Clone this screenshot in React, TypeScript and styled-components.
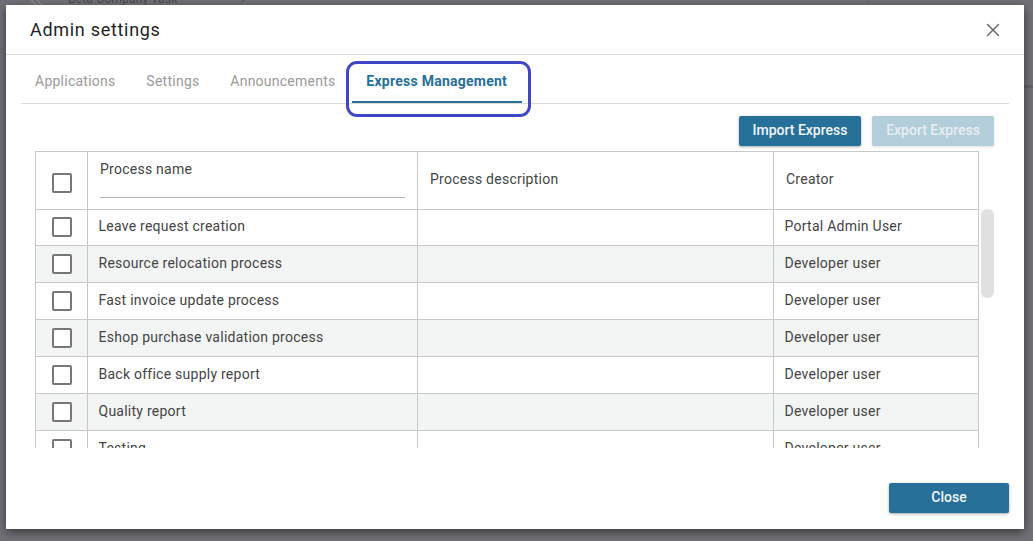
import styled, { createGlobalStyle } from "styled-components";
import { ChevronRight, X } from "lucide-react";

const GlobalStyle = createGlobalStyle`
  html, body {
    margin: 0;
    padding: 0;
    height: 100%;
    overflow: hidden;
    background: #707076;
    font-family: Roboto, "Liberation Sans", sans-serif;
  }
`;

const Page = styled.div`
  position: relative;
  width: 1033px;
  height: 541px;
  overflow: hidden;
  background: #707076;
`;

const BehindRow = styled.div`
  width: 868px;
  height: 6px;
  box-sizing: border-box;
  display: flex;
  align-items: flex-end;
  padding-left: 28px;
  border-right: 1px solid #66666b;
  color: #4a4a4e;
  font-size: 12px;
  letter-spacing: 0.2px;
  line-height: 14px;
`;

const BehindText = styled.span`
  width: 168px;
  margin-left: 23px;
  white-space: nowrap;
`;

const BehindRule = styled.div`
  height: 3px;
  margin: 79px 0 0 1000px;
  background: #636368;
`;

const Dialog = styled.div`
  position: absolute;
  left: 6px;
  top: 5px;
  width: 1018px;
  height: 524px;
  display: flex;
  flex-direction: column;
  background: #fff;
  box-shadow: 0 3px 9px rgba(0, 0, 0, 0.5);
`;

const Header = styled.div`
  height: 50px;
  box-sizing: border-box;
  display: flex;
  align-items: center;
  justify-content: space-between;
  padding: 0 20px 0 24px;
  border-bottom: 1px solid #dcdcdc;
  flex-shrink: 0;
`;

const Title = styled.h1`
  margin: 0;
  font-size: 18px;
  font-weight: 400;
  letter-spacing: 0.7px;
  color: #1f1f1f;
`;

const CloseIcon = styled.button`
  display: flex;
  padding: 0;
  border: 0;
  background: none;
  color: #6b6b6b;
`;

const Body = styled.div`
  flex: 1;
  min-height: 0;
  display: flex;
  flex-direction: column;
  padding: 0 15px;
`;

const TabBar = styled.div`
  height: 49px;
  box-sizing: border-box;
  display: flex;
  gap: 1px;
  border-bottom: 1px solid #dcdcdc;
  flex-shrink: 0;
`;

const Tab = styled.div<{ $active?: boolean }>`
  position: relative;
  height: 48px;
  box-sizing: border-box;
  padding: 5px ${(p) => (p.$active ? 14.5 : 15.8)}px 0 14px;
  display: flex;
  align-items: center;
  font-size: 14px;
  letter-spacing: 0.25px;
  font-weight: ${(p) => (p.$active ? 700 : 400)};
  color: ${(p) => (p.$active ? "#26709a" : "#9a9a9a")};
  border-bottom: 2px solid ${(p) => (p.$active ? "#26709a" : "transparent")};
`;

const Highlight = styled.span`
  position: absolute;
  left: -6px;
  top: 6px;
  right: -9.5px;
  bottom: -16px;
  border: 3px solid #4146c6;
  border-radius: 11px;
  pointer-events: none;
`;

const Toolbar = styled.div`
  height: 47px;
  display: flex;
  align-items: flex-start;
  justify-content: flex-end;
  gap: 11px;
  padding: 12px 15px 0 0;
  box-sizing: border-box;
  flex-shrink: 0;
`;

const Button = styled.button<{ $disabled?: boolean; $width?: number }>`
  height: 30px;
  width: ${(p) => p.$width ?? 122}px;
  padding: 0 0 2px;
  border: 0;
  border-radius: 2px;
  font-family: inherit;
  font-size: 14px;
  font-weight: 500;
  color: ${(p) => (p.$disabled ? "#e6eef3" : "#f2f6f8")};
  background: ${(p) => (p.$disabled ? "#b3cdda" : "#26709a")};
  box-shadow: 0 1px 3px rgba(0, 0, 0, ${(p) => (p.$disabled ? 0.12 : 0.35)});
`;

const TableArea = styled.div`
  position: relative;
  height: 297px;
  overflow: hidden;
  padding-left: 14px;
  flex-shrink: 0;
`;

const Scrollbar = styled.div`
  position: absolute;
  left: 960px;
  top: 58px;
  width: 13px;
  height: 89px;
  border-radius: 6px;
  background: #e0e0e0;
`;

const Table = styled.table`
  width: 943px;
  border-collapse: collapse;
  table-layout: fixed;
  font-size: 14px;
  letter-spacing: 0.25px;
  color: #444;
`;

const HeadRow = styled.tr`
  height: 58px;
`;

const Row = styled.tr<{ $striped: boolean }>`
  height: 37px;
  background: ${(p) => (p.$striped ? "#f3f5f4" : "#fff")};

  &:first-child {
    height: 36px;
  }

  &:first-child > td {
    padding-bottom: 4px;
  }

  &:first-child > td:first-child {
    padding-bottom: 2px;
  }
`;

const HeadCell = styled.th`
  border: 1px solid #c8c8c8;
  padding: 0 12px 4px;
  font-weight: 400;
  text-align: left;
`;

const HeadCheckCell = styled(HeadCell)`
  padding: 4px 12px 0;
`;

const Cell = styled.td`
  border: 1px solid #c8c8c8;
  padding: 0 10.5px 2px;
`;

const CheckBodyCell = styled(Cell)`
  padding: 0 11px;
`;

const NameFilter = styled.div`
  height: 39px;
  border-bottom: 1px solid #b4b4b4;
  line-height: 21px;
  box-sizing: border-box;
`;

const CheckWrap = styled.div`
  display: flex;
  justify-content: center;
`;

const Check = styled.span`
  width: 20px;
  height: 20px;
  box-sizing: border-box;
  border: 2px solid #777;
  border-radius: 2px;
  background: #fff;
`;

const Footer = styled.div`
  flex: 1;
  display: flex;
  justify-content: flex-end;
  align-items: flex-start;
  padding: 35px 0 0;
`;

const rows = [
  ["Leave request creation", "Portal Admin User"],
  ["Resource relocation process", "Developer user"],
  ["Fast invoice update process", "Developer user"],
  ["Eshop purchase validation process", "Developer user"],
  ["Back office supply report", "Developer user"],
  ["Quality report", "Developer user"],
  ["Testing", "Developer user"],
];

export default function App() {
  return (
    <Page>
      <GlobalStyle />
      <BehindRow>
        <svg width="17" height="6" viewBox="0 0 17 6" fill="none" stroke="#87878b" strokeWidth="1.5">
          <path d="M3 0l5 5M9 0l5 5" />
        </svg>
        <BehindText>Beta Company Task</BehindText>
        <ChevronRight size={14} strokeWidth={1.5} />
      </BehindRow>
      <BehindRule />
      <Dialog>
        <Header>
          <Title>Admin settings</Title>
          <CloseIcon>
            <X size={22} strokeWidth={1.6} />
          </CloseIcon>
        </Header>
        <Body>
          <TabBar>
            <Tab>Applications</Tab>
            <Tab>Settings</Tab>
            <Tab>Announcements</Tab>
            <Tab $active>
              Express Management
              <Highlight />
            </Tab>
          </TabBar>
          <Toolbar>
            <Button>Import Express</Button>
            <Button $disabled>Export Express</Button>
          </Toolbar>
          <TableArea>
            <Table>
              <colgroup>
                <col style={{ width: 52 }} />
                <col style={{ width: 330 }} />
                <col style={{ width: 356 }} />
                <col style={{ width: 205 }} />
              </colgroup>
              <thead>
                <HeadRow>
                  <HeadCheckCell>
                    <CheckWrap>
                      <Check />
                    </CheckWrap>
                  </HeadCheckCell>
                  <HeadCell>
                    <NameFilter>Process name</NameFilter>
                  </HeadCell>
                  <HeadCell>Process description</HeadCell>
                  <HeadCell>Creator</HeadCell>
                </HeadRow>
              </thead>
              <tbody>
                {rows.map((r, i) => (
                  <Row key={r[0]} $striped={i % 2 === 1}>
                    <CheckBodyCell>
                      <CheckWrap>
                        <Check />
                      </CheckWrap>
                    </CheckBodyCell>
                    <Cell>{r[0]}</Cell>
                    <Cell />
                    <Cell>{r[1]}</Cell>
                  </Row>
                ))}
              </tbody>
            </Table>
            <Scrollbar />
          </TableArea>
          <Footer>
            <Button $width={120}>Close</Button>
          </Footer>
        </Body>
      </Dialog>
    </Page>
  );
}
